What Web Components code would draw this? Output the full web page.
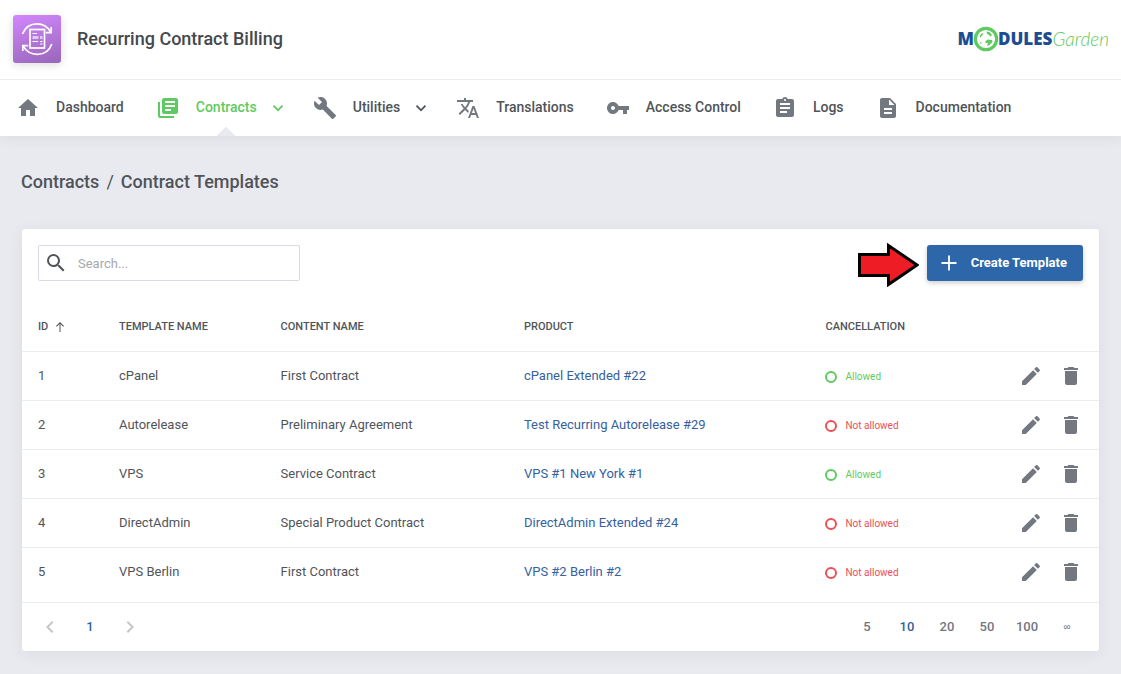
<!DOCTYPE html>
<html lang="en">
<head>
<meta charset="utf-8">
<title>Recurring Contract Billing</title>
<style>
  html, body { margin: 0; min-height: 100%; }
  body {
    --page: #e9eaef;
    --line: #ebecee;
    --text: #505459;
    --icon: #737780;
    --blue: #2d66a9;
    --link: #3561a0;
    --green: #5fca61;
    --red: #ec4f57;
    background: var(--page);
    color: var(--text);
    font: 13px/20px Roboto, "Liberation Sans", sans-serif;
  }
</style>
</head>
<body>
<billing-app></billing-app>

<script>
const ICONS = {
  home: 'M10,20V14H14V20H19V12H22L12,3L2,12H5V20H10Z',
  library: 'M19,7H9V5H19M15,15H9V13H15M19,11H9V9H19M20,2H8A2,2 0 0,0 6,4V16A2,2 0 0,0 8,18H20A2,2 0 0,0 22,16V4A2,2 0 0,0 20,2M4,6H2V20A2,2 0 0,0 4,22H18V20H4V6Z',
  wrench: 'M22.7,19L13.6,9.9C14.5,7.6 14,4.9 12.1,3C10.1,1 7.1,0.6 4.7,1.7L9,6L6,9L1.6,4.7C0.4,7.1 0.9,10.1 2.9,12.1C4.8,14 7.5,14.5 9.8,13.6L18.9,22.7C19.3,23.1 19.9,23.1 20.3,22.7L22.6,20.4C23.1,20 23.1,19.3 22.7,19Z',
  translate: 'M12.87,15.07L10.33,12.56L10.36,12.53C12.1,10.59 13.34,8.36 14.07,6H17V4H10V2H8V4H1V6H12.17C11.5,7.92 10.44,9.75 9,11.35C8.07,10.32 7.3,9.19 6.69,8H4.69C5.42,9.63 6.42,11.17 7.67,12.56L2.58,17.58L4,19L9,14L12.11,17.11L12.87,15.07M18.5,10H16.5L12,22H14L15.12,19H19.87L21,22H23L18.5,10M15.88,17L17.5,12.67L19.12,17H15.88Z',
  key: 'M12.65 10C11.83 7.67 9.61 6 7 6c-3.31 0-6 2.69-6 6s2.69 6 6 6c2.61 0 4.83-1.67 5.65-4H17v4h4v-4h2v-4H12.65zM7 14c-1.1 0-2-.9-2-2s.9-2 2-2 2 .9 2 2-.9 2-2 2z',
  clipboard: 'M19 3h-4.18C14.4 1.84 13.3 1 12 1c-1.3 0-2.4.84-2.82 2H5c-1.1 0-2 .9-2 2v14c0 1.1.9 2 2 2h14c1.1 0 2-.9 2-2V5c0-1.1-.9-2-2-2zm-7 0c.55 0 1 .45 1 1s-.45 1-1 1-1-.45-1-1 .45-1 1-1zm2 14H7v-2h7v2zm3-4H7v-2h10v2zm0-4H7V7h10v2z',
  document: 'M14 2H6c-1.1 0-1.99.9-1.99 2L4 20c0 1.1.89 2 1.99 2H18c1.1 0 2-.9 2-2V8l-6-6zm2 16H8v-2h8v2zm0-4H8v-2h8v2zm-3-5V3.5L18.5 9H13z',
  pencil: 'M20.71,7.04C21.1,6.65 21.1,6 20.71,5.63L18.37,3.29C18,2.9 17.35,2.9 16.96,3.29L15.12,5.12L18.87,8.87M3,17.25V21H6.75L17.81,9.93L14.06,6.18L3,17.25Z',
  trash: 'M19,4H15.5L14.5,3H9.5L8.5,4H5V6H19M6,19A2,2 0 0,0 8,21H16A2,2 0 0,0 18,19V7H6V19Z',
  search: 'M9.5,3A6.5,6.5 0 0,1 16,9.5C16,11.11 15.41,12.59 14.44,13.73L14.71,14H15.5L20.5,19L19,20.5L14,15.5V14.71L13.73,14.44C12.59,15.41 11.11,16 9.5,16A6.5,6.5 0 0,1 3,9.5A6.5,6.5 0 0,1 9.5,3M9.5,5C7,5 5,7 5,9.5C5,12 7,14 9.5,14C12,14 14,12 14,9.5C14,7 12,5 9.5,5Z',
  plus: 'M11.1,4.5H12.9V11.1H19.5V12.9H12.9V19.5H11.1V12.9H4.5V11.1H11.1Z',
  down: 'M5.4,7L12,13.6L18.6,7L20.8,9.200L12,18L3.2,9.200Z',
  left: 'M15.41,16.58L10.83,12L15.41,7.41L14,6L8,12L14,18L15.41,16.58Z',
  right: 'M8.59,16.58L13.17,12L8.59,7.41L10,6L16,12L10,18L8.59,16.58Z',
  up: 'M11,22V6.2L5.6,11.6L4,10L12,2L20,10L18.4,11.6L13,6.2V22Z'
};

function define(name, render) {
  customElements.define(name, class extends HTMLElement {
    constructor() { super(); this.attachShadow({ mode: 'open' }); }
    connectedCallback() { this.shadowRoot.innerHTML = render(this); }
  });
}

define('app-icon', el => `
  <style>
    :host { display: block; flex: none; width: 24px; height: 24px; }
    svg { display: block; width: 100%; height: 100%; fill: currentColor; }
  </style>
  <svg viewBox="0 0 24 24" aria-hidden="true"><path d="${ICONS[el.getAttribute('name')]}"/></svg>`);

define('product-mark', () => `
  <style>
    :host { display: block; flex: none; width: 48px; height: 48px; border-radius: 3px;
      background: linear-gradient(165deg, #d286fc, #9867ba); box-shadow: 0 2px 8px rgba(0,0,0,.14); }
    svg { display: block; }
  </style>
  <svg width="48" height="48" viewBox="0 0 48 48" fill="none" stroke="#fff" stroke-width="1.7" aria-hidden="true">
    <path d="M9.500 19C12 12.500 17.500 8.800 24 8.800C30 8.800 35 12 38 17.300"/>
    <path d="M38.200 12V17.600H32.800"/>
    <path d="M38.800 29C36.500 35.500 31 39.300 24.500 39.300C18 39.300 13 36 10 30.800"/>
    <path d="M9.800 36V30.600H15.200"/>
    <rect x="17" y="14.500" width="14.500" height="18.500"/>
    <path d="M19.500 18.500H24M19.500 26.500H25M27 26.500H29.500M27 29H29.500" stroke-width="1"/>
    <path d="M19.500 22.500H25.500M27 22.500H29.500" stroke-width="3" opacity=".6"/>
  </svg>`);

define('brand-logo', () => `
  <style>
    :host { display: block; }
    a { display: flex; align-items: center; text-decoration: none; font-family: "Open Sans", sans-serif; font-size: 17px; line-height: 26px; color: #1b4d93; }
    b { font-weight: 800; }
    i { font-family: Lato, sans-serif; font-weight: 300; font-size: 19px; color: var(--green); }
    svg { display: block; flex: none; margin: 0 -1px; }
  </style>
  <a href="#" aria-label="ModulesGarden"><b>M</b><svg width="26" height="26" viewBox="0 0 26 26" aria-hidden="true">
    <circle cx="13" cy="13" r="10.700" fill="#fff" stroke="#5fca61" stroke-width="3.200"/>
    <path d="M6.500 10.500L8.500 7.500L10.500 7L9.500 9L7.500 11.500ZM13.500 5.500L16.500 6L19 9L17.500 10.500L15.500 8.500L14 8ZM12.500 15L15 13.500L19 14L19.500 16L16.500 19L14 20L15 17L12.500 17ZM6.500 15L8.500 17L8 18.500Z" fill="#5fca61"/>
  </svg><b>DULES</b><i>Garden</i></a>`);

define('app-header', () => `
  <style>
    :host { display: flex; align-items: center; justify-content: space-between; box-sizing: border-box;
      height: 80px; padding: 0 12px 1px 13px; background: #fff; border-bottom: 1px solid var(--line); }
    div { display: flex; align-items: center; gap: 16px; }
    h1 { margin: 0; font-size: 18px; line-height: 24px; font-weight: 500; color: #45484c; }
  </style>
  <div><product-mark></product-mark><h1>Recurring Contract Billing</h1></div>
  <brand-logo></brand-logo>`);

define('nav-item', el => `
  <style>
    :host { display: block; flex: none; color: var(--text); }
    :host([active]) { color: var(--green); }
    :host([menu]) { margin-right: -4px; }
    a { display: flex; align-items: center; height: 56px; color: inherit; text-decoration: none; font-size: 14px; line-height: 20px; font-weight: 500; }
    .icon { margin-right: 16px; color: var(--icon); }
    :host([active]) .icon { color: inherit; }
    .chevron { width: 14px; height: 14px; margin-left: 14px; }
    .label { display: flex; align-items: center; box-sizing: border-box; height: 56px; padding-bottom: 2px; }
    :host([active]) .label { background: conic-gradient(from 135deg at 50% 0, var(--page) 90deg, transparent 0) 50% 100% / 18px 9px no-repeat; }
  </style>
  <a href="#"><app-icon class="icon" name="${el.getAttribute('icon')}"></app-icon><span class="label"><slot></slot></span>${
    el.hasAttribute('menu') ? '<app-icon class="chevron" name="down"></app-icon>' : ''}</a>`);

define('app-nav', () => `
  <style>
    :host { display: block; background: #fff; box-shadow: 0 2px 12px rgba(60,60,80,.08); clip-path: inset(0 0 -20px 0); }
    nav { display: flex; gap: 32px; padding: 0 16px; }
  </style>
  <nav aria-label="Main">
    <nav-item icon="home">Dashboard</nav-item>
    <nav-item icon="library" active menu>Contracts</nav-item>
    <nav-item icon="wrench" menu>Utilities</nav-item>
    <nav-item icon="translate">Translations</nav-item>
    <nav-item icon="key">Access Control</nav-item>
    <nav-item icon="clipboard">Logs</nav-item>
    <nav-item icon="document">Documentation</nav-item>
  </nav>`);

define('page-breadcrumb', () => `
  <style>
    :host { display: block; font-size: 18px; line-height: 24px; font-weight: 500; }
    nav { display: flex; gap: 7px; }
    a { color: inherit; text-decoration: none; }
    i { font-style: normal; font-weight: 400; }
  </style>
  <nav aria-label="Breadcrumb"><a href="#">Contracts</a><i>/</i><span>Contract Templates</span></nav>`);

define('search-field', () => `
  <style>
    :host { display: block; width: 262px; }
    label { display: flex; align-items: center; gap: 10px; box-sizing: border-box; height: 36px; padding: 0 5px; border: 1px solid #d9dae4; border-radius: 2px; color: var(--text); }
    input { flex: 1; min-width: 0; border: 0; padding: 1px 0 0; outline: 0; background: none; font: inherit; color: inherit; }
    input::placeholder { color: #a6a8ac; opacity: 1; }
  </style>
  <label><app-icon name="search"></app-icon><input type="text" placeholder="Search..." aria-label="Search"></label>`);

define('pointer-arrow', () => `
  <style>:host { display: block; flex: none; } svg { display: block; }</style>
  <svg width="61" height="48" viewBox="0 0 61 48" aria-hidden="true">
    <path d="M1.500 15.500H30.500V6.500L59 26L30.500 45.500V36.500H1.500Z" fill="#ee1c24" stroke="#000" stroke-width="3"/>
  </svg>`);

define('primary-button', () => `
  <style>
    :host { display: block; }
    button { display: flex; align-items: center; gap: 10px; height: 36px; padding: 0 16px 0 10px; border: 0; border-radius: 3px;
      background: var(--blue); color: #fff; font: bold 13px/20px Roboto, sans-serif; box-shadow: 0 2px 5px rgba(0,0,0,.2); cursor: pointer; }
  </style>
  <button type="button"><app-icon name="plus"></app-icon><slot></slot></button>`);

define('card-toolbar', () => `
  <style>
    :host { display: flex; align-items: center; justify-content: space-between; padding: 10px 16px 14px; }
    div { display: flex; align-items: center; gap: 8px; }
  </style>
  <search-field></search-field>
  <div><pointer-arrow></pointer-arrow><primary-button>Create Template</primary-button></div>`);

define('status-label', () => `
  <style>
    :host { display: flex; align-items: center; gap: 8px; margin-right: auto; padding-top: 2px; color: var(--red); font-size: 10px; line-height: 16px; }
    :host([ok]) { color: var(--green); }
    i { box-sizing: border-box; width: 12px; height: 12px; border: 2px solid; border-radius: 50%; }
  </style>
  <i></i><span><slot></slot></span>`);

const ROWS = [
  [1, 'cPanel', 'First Contract', 'cPanel Extended #22', true],
  [2, 'Autorelease', 'Preliminary Agreement', 'Test Recurring Autorelease #29', false],
  [3, 'VPS', 'Service Contract', 'VPS #1 New York #1', true],
  [4, 'DirectAdmin', 'Special Product Contract', 'DirectAdmin Extended #24', false],
  [5, 'VPS Berlin', 'First Contract', 'VPS #2 Berlin #2', false]
];

define('template-table', () => `
  <style>
    :host { display: block; padding-bottom: 6px; }
    table { width: 100%; table-layout: fixed; border-collapse: separate; border-spacing: 0; }
    .id { width: 81px; } .name { width: 15%; } .content { width: 22.6%; } .product { width: 28%; }
    th, td { box-sizing: border-box; height: 49px; padding: 0 16px; text-align: left; vertical-align: middle; }
    th { height: 50px; padding-top: 1px; font-size: 11px; line-height: 16px; font-weight: 500; white-space: nowrap; }
    td { border-top: 1px solid var(--line); }
    th span { display: inline-flex; align-items: center; gap: 6px; }
    th app-icon { width: 12px; height: 12px; }
    a { color: var(--link); text-decoration: none; }
    .actions { display: flex; justify-content: flex-end; gap: 16px; }
    .actions button { border: 0; padding: 0; background: none; color: var(--icon); cursor: pointer; }
  </style>
  <table>
    <colgroup><col class="id"><col class="name"><col class="content"><col class="product"><col></colgroup>
    <thead><tr><th aria-sort="ascending"><span>ID <app-icon name="up"></app-icon></span></th><th>TEMPLATE NAME</th><th>CONTENT NAME</th><th>PRODUCT</th><th>CANCELLATION</th></tr></thead>
    <tbody>${ROWS.map(([id, name, content, product, ok]) => `
      <tr><td>${id}</td><td>${name}</td><td>${content}</td><td><a href="#">${product}</a></td>
      <td><div class="actions"><status-label ${ok ? 'ok' : ''}>${ok ? 'Allowed' : 'Not allowed'}</status-label>
        <button type="button" aria-label="Edit ${name}"><app-icon name="pencil"></app-icon></button>
        <button type="button" aria-label="Delete ${name}"><app-icon name="trash"></app-icon></button></div></td></tr>`).join('')}
    </tbody>
  </table>`);

define('table-pager', () => `
  <style>
    :host { display: flex; justify-content: space-between; padding: 0 12px 0 8px; border-top: 1px solid var(--line); }
    div { display: flex; }
    button { display: flex; align-items: center; justify-content: center; width: 40px; height: 48px; padding: 0; border: 0; background: none;
      color: var(--icon); font: 500 13px/20px Roboto, sans-serif; cursor: pointer; }
    .current { color: var(--link); }
    .step { color: #c4c6ca; }
    .all { font: 10px/20px "Liberation Sans", sans-serif; }
  </style>
  <div>
    <button type="button" class="step" aria-label="Previous page"><app-icon name="left"></app-icon></button>
    <button type="button" class="current" aria-current="page">1</button>
    <button type="button" class="step" aria-label="Next page"><app-icon name="right"></app-icon></button>
  </div>
  <div>
    <button type="button">5</button><button type="button" class="current">10</button><button type="button">20</button>
    <button type="button">50</button><button type="button">100</button><button type="button" class="all">∞</button>
  </div>`);

define('content-card', () => `
  <style>
    :host { display: block; background: #fff; border-radius: 3px; box-shadow: 0 3px 16px rgba(60,60,80,.07); }
  </style>
  <slot></slot>`);

define('billing-app', () => `
  <style>
    :host { display: block; }
    main { padding: 34px 22px 22px 21px; }
    content-card { margin: 35px 0 0 1px; }
  </style>
  <header><app-header></app-header><app-nav></app-nav></header>
  <main>
    <page-breadcrumb></page-breadcrumb>
    <content-card>
      <card-toolbar></card-toolbar>
      <template-table></template-table>
      <table-pager></table-pager>
    </content-card>
  </main>`);
</script>
</body>
</html>
